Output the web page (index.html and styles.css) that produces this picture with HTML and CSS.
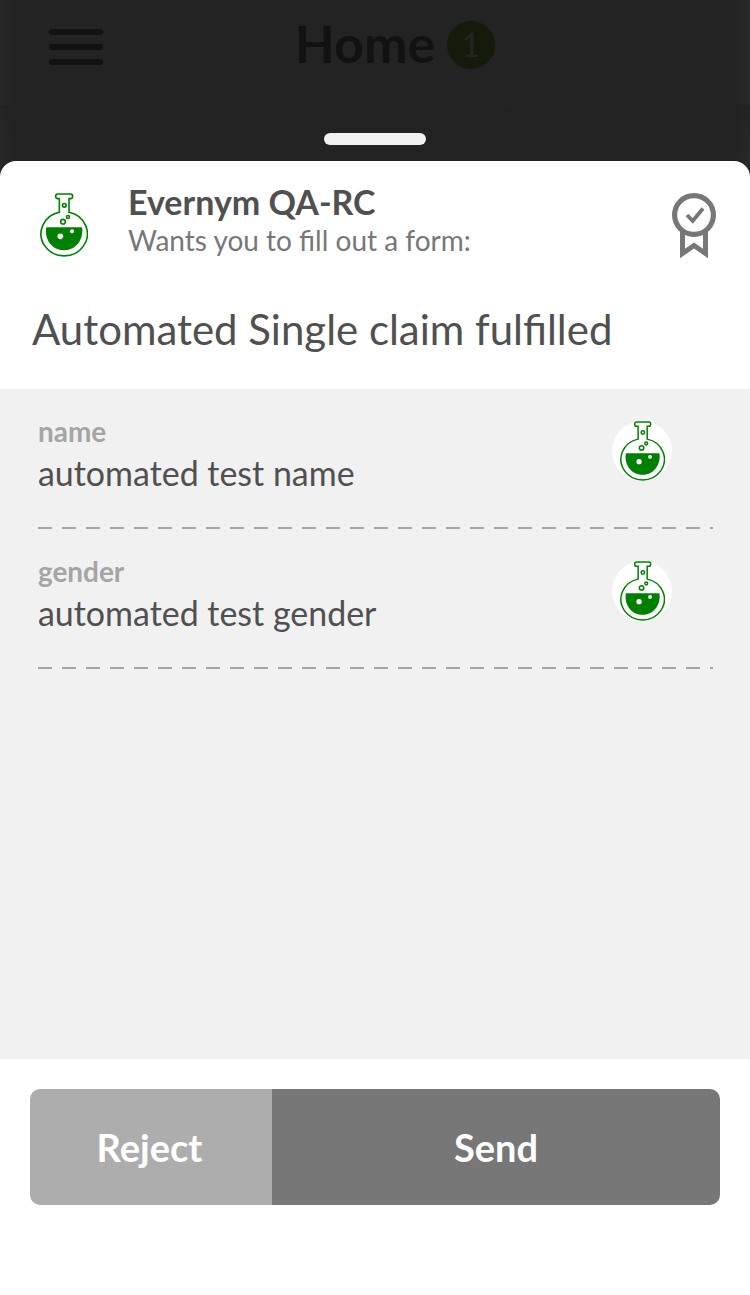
FILE: index.html
```html
<!DOCTYPE html>
<html lang="en">
<head>
<meta charset="utf-8">
<title>Claim request</title>
<link rel="stylesheet" href="styles.css">
</head>
<body>
<svg class="sprite" aria-hidden="true">
  <symbol id="flask" viewBox="48 40 144 192">
    <g fill="none" stroke="#008000" stroke-width="4.8">
      <path d="M106 98V57h-5q-6 0-6-7t6-7h39q6 0 6 7t-6 7h-5v41A69.500 66 0 1 1 106 98Z"/>
      <circle cx="121" cy="77" r="5.500"/>
      <circle cx="132" cy="112" r="4.500"/>
      <circle cx="117" cy="126" r="7"/>
    </g>
    <path fill="#008000" d="M67 143H174C180 176 158 212 120 212S60 176 67 143Z"/>
    <circle cx="109" cy="170" r="8.500" fill="#fff"/>
    <circle cx="144" cy="155" r="6" fill="#fff"/>
  </symbol>
</svg>
<div class="screen">
  <header class="topbar">
    <div class="menu"><span></span><span></span><span></span></div>
    <div class="heading"><span class="home">Home</span><span class="badge">1</span></div>
  </header>
  <div class="backdrop"><div class="handle"></div></div>
  <main class="sheet">
    <section class="intro">
      <div class="sender">
        <svg class="logo"><use href="#flask"/></svg>
        <div class="sender-text">
          <div class="sender-name">Evernym QA-RC</div>
          <div class="sender-note">Wants you to fill out a form:</div>
        </div>
        <svg class="ribbon" viewBox="0 0 44 66" fill="none" stroke="#777">
          <circle cx="22" cy="22" r="19.400" stroke-width="5.200"/>
          <path d="M10.500 38V60.500L22 52.500L33.500 60.500V38" stroke-width="5"/>
          <path d="M15 22L20.700 28L31 15.500" stroke-width="3.800"/>
        </svg>
      </div>
      <h1 class="title">Automated Single claim fulfilled</h1>
    </section>
    <section class="fields">
      <div class="field">
        <div class="field-text"><div class="label">name</div><div class="value">automated test name</div></div>
        <div class="avatar"><svg class="avatar-icon"><use href="#flask"/></svg></div>
      </div>
      <div class="field">
        <div class="field-text"><div class="label">gender</div><div class="value">automated test gender</div></div>
        <div class="avatar"><svg class="avatar-icon"><use href="#flask"/></svg></div>
      </div>
    </section>
    <footer class="actions">
      <button class="reject">Reject</button><button class="send">Send</button>
    </footer>
  </main>
</div>
</body>
</html>
```
FILE: styles.css
```css
* { box-sizing: border-box; }
body { margin: 0; font-family: Lato, "Liberation Sans", sans-serif; color: #505050; }
.sprite { position: absolute; width: 0; height: 0; }
.screen {
  width: 750px; height: 1295px; overflow: hidden;
  display: flex; flex-direction: column;
  background: linear-gradient(90deg, #292929, #232323 14px, #232323 736px, #292929);
}
.topbar {
  height: 105px; padding: 21px 49px 0;
  display: grid; grid-template-columns: 54px 1fr 54px; align-items: start;
}
.menu { display: grid; gap: 9px; padding-top: 8px; }
.menu span { height: 6px; border-radius: 3px; background: #121212; }
.heading { display: flex; justify-content: center; gap: 12px; padding-left: 40px; }
.home { font-size: 52px; line-height: 48px; height: 48px; margin-top: -2px; font-weight: 700; color: #121212; }
.badge {
  width: 48px; height: 48px; padding-right: 1px; border-radius: 50%; background: #141b0a;
  color: #252525; font-size: 32px; line-height: 48px; text-align: center;
}
.backdrop {
  height: 56px; padding-top: 28px; display: flex; justify-content: center;
  background: linear-gradient(#21212199, #23232300);
}
.handle { width: 102px; height: 12px; border-radius: 6px; background: #f1f1f1; }
.sheet { flex: 1; display: flex; flex-direction: column; background: #fff; border-radius: 16px 16px 0 0; overflow: hidden; }
.intro { height: 228px; padding: 22px 34px 0 32px; }
.sender { display: flex; height: 114px; }
.logo { width: 48px; height: 64px; margin: 10px 40px 0 8px; }
.sender-text { flex: 1; }
.sender-name { font-size: 34px; line-height: 38px; padding-bottom: 2px; font-weight: 700; }
.sender-note { font-size: 28px; line-height: 34px; color: #777; }
.ribbon { width: 44px; height: 66px; margin-top: 10px; }
.title { margin: 6px 0 0; font-size: 41.950px; line-height: 52px; font-weight: 400; }
.fields { height: 670px; background: #f1f1f1; padding: 0 37px 0 38px; }
.field {
  height: 140px; padding: 24px 41px 0 0;
  display: flex; justify-content: space-between;
  background: repeating-linear-gradient(90deg, #a5a5a5 0 14px, transparent 14px 24px) 0 138px / 100% 2px no-repeat;
}
.label { font-size: 27.900px; line-height: 34px; padding: 1px 0; font-weight: 700; color: #a5a5a5; }
.value { font-size: 33.950px; line-height: 48px; }
.avatar { width: 60px; height: 60px; margin-top: 8px; border-radius: 50%; background: #fff; display: grid; place-items: center; }
.avatar-icon { width: 45px; height: 60px; }
.actions { display: flex; padding: 30px; }
.actions button {
  height: 116px; padding: 0; border: 0; color: #fff;
  font: 700 38px/116px Lato, "Liberation Sans", sans-serif;
}
.actions .reject { width: 242px; padding-right: 3px; background: #adadad; border-radius: 10px 0 0 10px; }
.actions .send { flex: 1; background: #777; border-radius: 0 10px 10px 0; }
```
